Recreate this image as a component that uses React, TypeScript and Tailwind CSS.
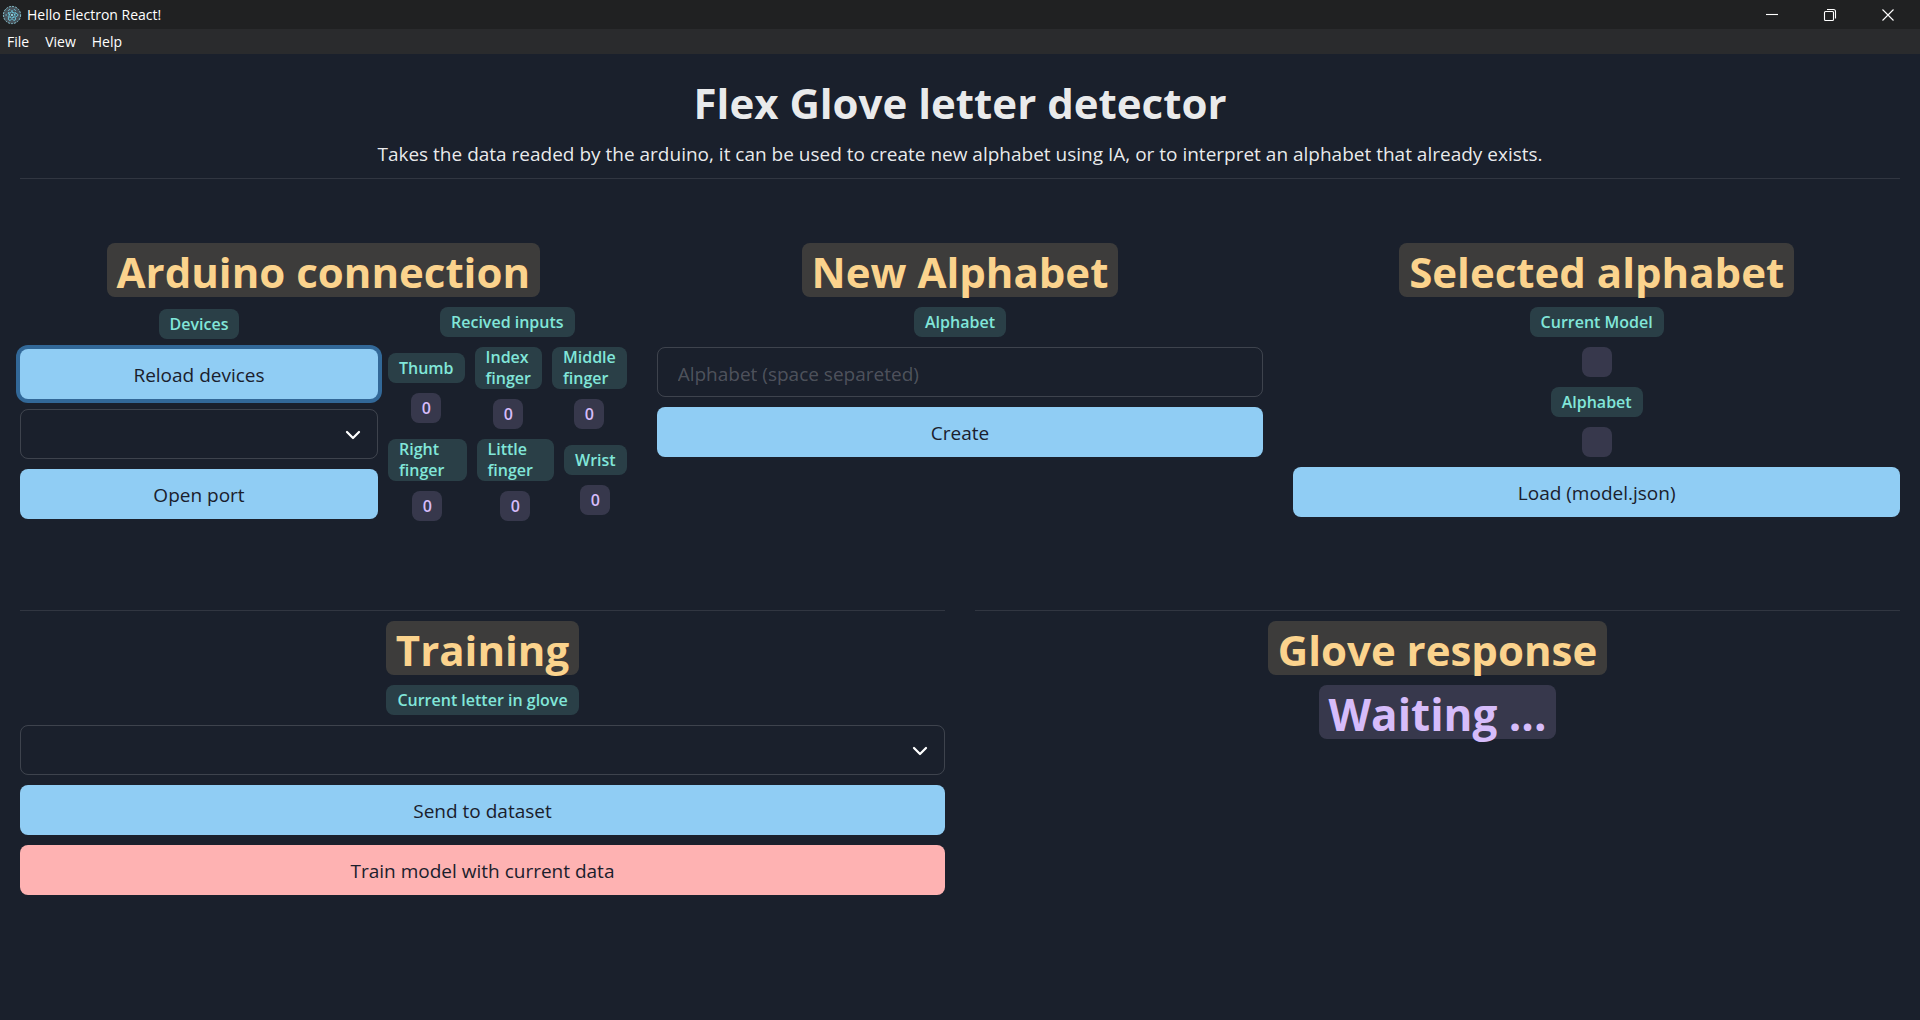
import type { ButtonHTMLAttributes, ReactNode } from "react";
import { ChevronDown } from "lucide-react";

function AppIcon() {
  return (
    <svg viewBox="0 0 20 20" className="size-5 shrink-0" aria-hidden="true" fill="none">
      <circle cx="10" cy="10" r="8.6" fill="#47525a" stroke="#8ccbd9" strokeWidth="0.9" strokeDasharray="2.2 0.9" />
      <g stroke="#6fd0e6" strokeWidth="0.8" strokeDasharray="3 1">
        <ellipse cx="10" cy="10" rx="6" ry="2.4" />
        <ellipse cx="10" cy="10" rx="6" ry="2.4" transform="rotate(60 10 10)" />
        <ellipse cx="10" cy="10" rx="6" ry="2.4" transform="rotate(120 10 10)" />
      </g>
      <circle cx="10" cy="10" r="1.1" fill="#9be4f3" />
    </svg>
  );
}

function WindowButton({ label, children }: { label: string; children: ReactNode }) {
  return (
    <button type="button" aria-label={label} className="flex h-full w-[58px] items-center justify-center">
      <svg viewBox="0 0 14 14" className="size-[14px]" fill="none" stroke="#ffffff" strokeWidth="1.1" aria-hidden="true">
        {children}
      </svg>
    </button>
  );
}

function TitleBar() {
  return (
    <header className="text-sm leading-5 text-white">
      <div className="flex h-[29px] items-center bg-[#202122] pr-[3px]">
        <div className="flex flex-1 items-center gap-[5px] pl-[2px]">
          <AppIcon />
          <span>Hello Electron React!</span>
        </div>
        <WindowButton label="Minimize">
          <path d="M1 6.5H13" />
        </WindowButton>
        <WindowButton label="Restore">
          <rect x="1.5" y="3.5" width="9" height="9" rx="1" />
          <path d="M4 1.5H10.5A2 2 0 0 1 12.5 3.5V10.5" />
        </WindowButton>
        <WindowButton label="Close">
          <path d="M1.5 1.5L12.5 12.5M12.5 1.5L1.5 12.5" />
        </WindowButton>
      </div>
      <nav className="flex h-[25px] items-center gap-4 bg-[#2a2b2d] pl-[7px]">
        <button type="button">File</button>
        <button type="button">View</button>
        <button type="button">Help</button>
      </nav>
    </header>
  );
}

function SectionTitle({ children }: { children: ReactNode }) {
  return (
    <h2 className="rounded-lg bg-[#fbd38d]/16 px-[10px] pt-1 text-[42px] leading-[50px] font-bold whitespace-nowrap text-[#fbd38d]">
      {children}
    </h2>
  );
}

function Tag({ children }: { children: ReactNode }) {
  return (
    <span className="flex min-h-[30px] items-center rounded-lg bg-[#81e6d9]/16 px-[11px] text-base leading-[21px] font-semibold text-[#81e6d9]">
      {children}
    </span>
  );
}

function Value({ children }: { children?: ReactNode }) {
  return (
    <span className="flex h-[30px] min-w-[30px] items-center justify-center rounded-lg bg-[#d6bcfa]/16 px-[10px] text-base leading-[21px] font-semibold text-[#d6bcfa]">
      {children}
    </span>
  );
}

function ActionButton({
  tone = "bg-[#90cdf4]",
  className = "",
  ...props
}: ButtonHTMLAttributes<HTMLButtonElement> & { tone?: string }) {
  return (
    <button
      type="button"
      className={`h-[50px] w-full rounded-lg pt-[2px] text-[19px] leading-6 font-medium text-[#1a202c] outline-none ${tone} ${className}`}
      {...props}
    />
  );
}

function SelectBox({ label }: { label: string }) {
  return (
    <div className="relative w-full">
      <select
        aria-label={label}
        className="block h-[50px] w-full appearance-none rounded-lg border border-white/16 bg-transparent px-5 text-[19px] text-white/92 outline-none"
      />
      <ChevronDown
        className="pointer-events-none absolute top-[14px] right-[13px] size-6 text-white"
        strokeWidth={2.25}
        aria-hidden="true"
      />
    </div>
  );
}

function Reading({ label, value }: { label: string; value: number }) {
  return (
    <div className="flex flex-col items-center gap-[10px]">
      <Tag>{label}</Tag>
      <Value>{value}</Value>
    </div>
  );
}

function ArduinoSection() {
  return (
    <section className="flex flex-col items-center gap-[10px]">
      <SectionTitle>Arduino connection</SectionTitle>
      <div className="grid w-full grid-cols-[minmax(0,3fr)_minmax(0,2fr)] items-center gap-[10px]">
        <div className="flex flex-col items-center gap-[10px]">
          <Tag>Devices</Tag>
          <ActionButton className="ring-4 ring-[#4299e1]/60">Reload devices</ActionButton>
          <SelectBox label="Port" />
          <ActionButton>Open port</ActionButton>
        </div>
        <div className="flex flex-col items-center gap-[10px]">
          <Tag>Recived inputs</Tag>
          <div className="grid w-full grid-cols-[76fr_67fr_76fr] items-center gap-[10px]">
            <Reading label="Thumb" value={0} />
            <Reading label="Index finger" value={0} />
            <Reading label="Middle finger" value={0} />
          </div>
          <div className="grid w-full grid-cols-[79fr_78fr_62fr] items-center gap-[10px]">
            <Reading label="Right finger" value={0} />
            <Reading label="Little finger" value={0} />
            <Reading label="Wrist" value={0} />
          </div>
        </div>
      </div>
    </section>
  );
}

function NewAlphabetSection() {
  return (
    <section className="flex flex-col items-center gap-[10px]">
      <SectionTitle>New Alphabet</SectionTitle>
      <label htmlFor="alphabet">
        <Tag>Alphabet</Tag>
      </label>
      <input
        id="alphabet"
        type="text"
        placeholder="Alphabet (space separeted)"
        className="h-[50px] w-full rounded-lg border border-white/16 bg-transparent px-5 pt-1 text-[19px] text-white/92 outline-none placeholder:text-white/24"
      />
      <ActionButton>Create</ActionButton>
    </section>
  );
}

function SelectedAlphabetSection() {
  return (
    <section className="flex flex-col items-center gap-[10px]">
      <SectionTitle>Selected alphabet</SectionTitle>
      <Tag>Current Model</Tag>
      <Value />
      <Tag>Alphabet</Tag>
      <Value />
      <ActionButton>Load (model.json)</ActionButton>
    </section>
  );
}

export default function App() {
  return (
    <div className="min-h-screen bg-[#1a202c] font-['Open_Sans','Noto_Sans',sans-serif] text-white/92">
      <TitleBar />
      <main className="px-5 pt-[23px]">
        <div className="flex flex-col items-center gap-3 border-b border-white/10 pb-[10px] text-center">
          <h1 className="text-[42px] leading-[52px] font-bold">Flex Glove letter detector</h1>
          <p className="text-[19px] leading-[27px]">
            Takes the data readed by the arduino, it can be used to create new alphabet using IA, or to interpret an
            alphabet that already exists.
          </p>
        </div>
        <div className="grid grid-cols-3 gap-[30px] pt-16">
          <ArduinoSection />
          <NewAlphabetSection />
          <SelectedAlphabetSection />
        </div>
        <div className="grid grid-cols-2 gap-[30px] pt-[89px]">
          <section className="flex flex-col items-center gap-[10px] border-t border-white/10 pt-[10px]">
            <SectionTitle>Training</SectionTitle>
            <Tag>Current letter in glove</Tag>
            <SelectBox label="Current letter in glove" />
            <ActionButton>Send to dataset</ActionButton>
            <ActionButton tone="bg-[#feb2b2]">Train model with current data</ActionButton>
          </section>
          <section className="flex flex-col items-center gap-[10px] border-t border-white/10 pt-[10px]">
            <SectionTitle>Glove response</SectionTitle>
            <p className="rounded-lg bg-[#d6bcfa]/16 px-[10px] pt-1 text-[44px] leading-[50px] font-bold text-[#d6bcfa]">
              Waiting ...
            </p>
          </section>
        </div>
      </main>
    </div>
  );
}
